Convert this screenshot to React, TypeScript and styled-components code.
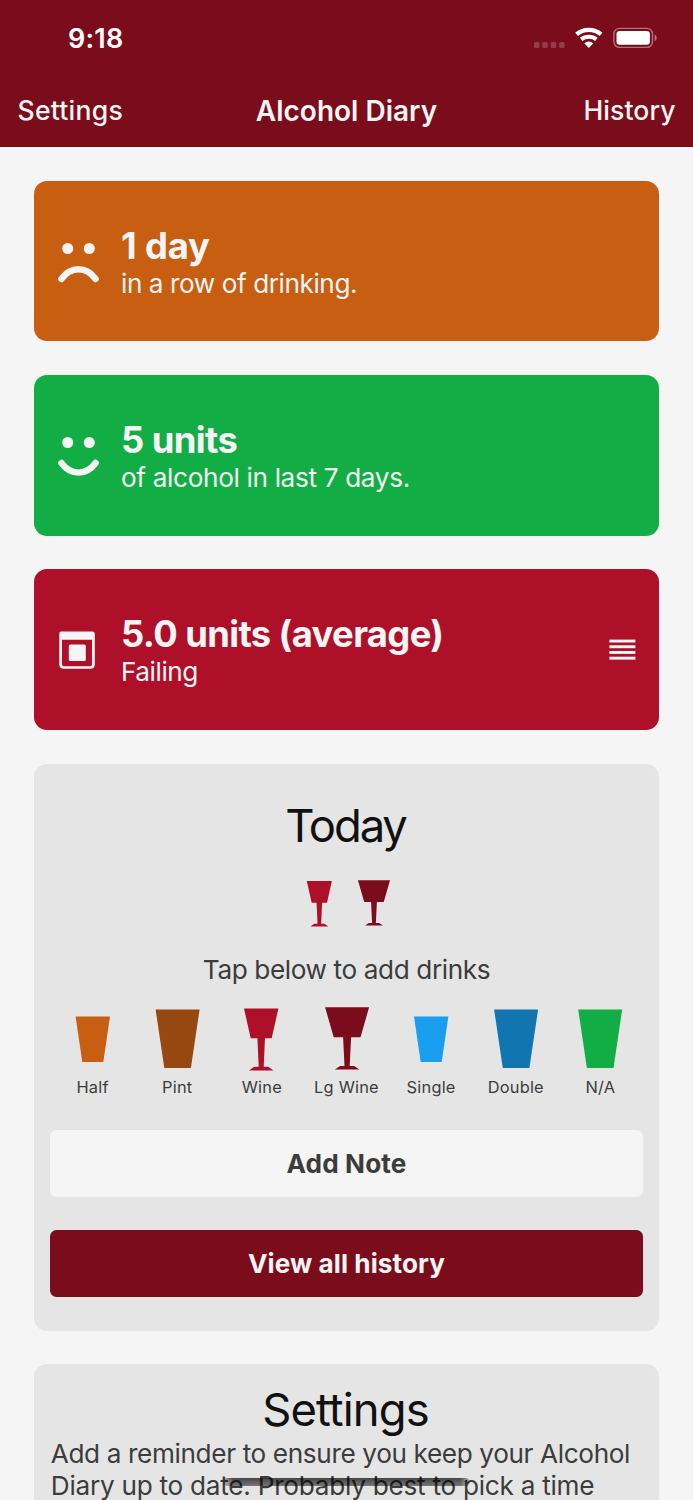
import React from "react";
import styled, { createGlobalStyle } from "styled-components";

const Global = createGlobalStyle`
  * { box-sizing: border-box; }
  html, body { margin: 0; background: #f5f5f5; }
  body {
    font-family: Inter, "Liberation Sans", sans-serif;
    overflow: hidden;
  }
  h1, h2, p { margin: 0; font-weight: 400; }
  button { font-family: inherit; border: 0; padding: 0; background: none; }
`;

const Screen = styled.div`
  width: 693px;
  height: 1500px;
  overflow: hidden;
  position: relative;
  background: #f5f5f5;
`;

const Header = styled.header`
  height: 147.3px;
  background: #7a0c1b;
  color: #fff;
`;

const StatusBar = styled.div`
  height: 74px;
  padding: 2px 36px 0 68px;
  display: flex;
  align-items: center;
  justify-content: space-between;
`;

const Clock = styled.span<{ $ls: number }>`
  font-size: 27px;
  font-weight: 600;
  letter-spacing: ${(p) => p.$ls}px;
`;

const StatusIcons = styled.svg`
  display: block;
`;

const NavBar = styled.nav`
  height: 73px;
  padding: 0 17.5px;
  display: grid;
  grid-template-columns: 1fr auto 1fr;
  align-items: center;
  color: #f5f5f5;
`;

const NavButton = styled.button<{ $end?: boolean; $ls: number }>`
  justify-self: ${(p) => (p.$end ? "end" : "start")};
  color: inherit;
  font-size: 26.6px;
  font-weight: 500;
  letter-spacing: ${(p) => p.$ls}px;
  margin-right: ${(p) => -p.$ls}px;
  margin-top: -2px;
  white-space: nowrap;
`;

const NavTitle = styled.h1<{ $ls: number }>`
  && { font-weight: 600; }
  font-size: 28px;
  letter-spacing: ${(p) => p.$ls}px;
  white-space: nowrap;
`;

const Content = styled.main`
  padding: 33.5px 33.6px 0;
  display: flex;
  flex-direction: column;
  gap: 33.6px;
`;

const StatCard = styled.section<{ $color: string }>`
  height: 160.7px;
  border-radius: 13px;
  background: ${(p) => p.$color};
  color: #f5f5f5;
  display: flex;
  align-items: center;
  padding: 2px 23px 0 23.4px;
`;

const StatIcon = styled.svg`
  width: 42px;
  height: 42px;
  margin: 2.6px 22px 0 0;
  flex: none;
  overflow: visible;
`;

const StatText = styled.div`
  flex: 1;
  padding-top: 1.2px;
`;

const StatValue = styled.h2<{ $ls: number }>`
  && { font-weight: 700; }
  font-size: 36.4px;
  line-height: 42px;
  letter-spacing: ${(p) => p.$ls}px;
  white-space: nowrap;
`;

const StatLabel = styled.p<{ $ls: number }>`
  padding-top: 0.2px;
  font-size: 26.2px;
  line-height: 34px;
  letter-spacing: ${(p) => p.$ls}px;
  white-space: nowrap;
`;

const MenuIcon = styled.svg`
  width: 28px;
  height: 24px;
  margin-top: -1px;
  flex: none;
`;

const Panel = styled.section<{ $height: number; $top: number }>`
  flex: none;
  height: ${(p) => p.$height}px;
  border-radius: 13px;
  background: #e5e5e5;
  padding: ${(p) => p.$top}px 16.7px 0;
`;

const PanelTitle = styled.h2<{ $ls: number }>`
  color: #111;
  font-size: 45.4px;
  line-height: 56px;
  text-align: center;
  letter-spacing: ${(p) => p.$ls}px;
  padding: 1px 2px 0 0;
`;

const Logged = styled.div`
  margin-top: 26px;
  height: 54px;
  display: flex;
  justify-content: center;
`;

const LoggedDrink = styled.svg`
  width: 54.7px;
  height: 54px;
`;

const Hint = styled.p<{ $ls: number }>`
  margin-top: 19.8px;
  color: #3c3c3c;
  font-size: 26.2px;
  line-height: 34px;
  text-align: center;
  letter-spacing: ${(p) => p.$ls}px;
`;

const Picker = styled.div`
  margin-top: 19.2px;
  display: grid;
  grid-template-columns: repeat(7, 1fr);
`;

const PickerItem = styled.button`
  display: flex;
  flex-direction: column;
  align-items: center;
  color: #3c3c3c;
  font-size: 16.4px;
  line-height: 22px;
  letter-spacing: 0.22px;
  white-space: nowrap;
`;

const DrinkIcon = styled.svg`
  width: 60px;
  height: 69.2px;
`;

const Action = styled.button<{ $primary?: boolean; $ls: number }>`
  display: block;
  width: 100%;
  height: 67px;
  margin-top: ${(p) => (p.$primary ? 33.3 : 32.2)}px;
  border-radius: 6.5px;
  background: ${(p) => (p.$primary ? "#7a0c1b" : "#f5f5f5")};
  color: ${(p) => (p.$primary ? "#f5f5f5" : "#3c3c3c")};
  font-size: 26.2px;
  font-weight: 700;
  letter-spacing: ${(p) => p.$ls}px;
`;

const Body = styled.p`
  color: #3c3c3c;
  font-size: 26.2px;
  line-height: 32px;
  padding-left: 0.5px;
`;

const Line = styled.span<{ $ls: number }>`
  display: block;
  white-space: nowrap;
  letter-spacing: ${(p) => p.$ls}px;
`;

const HomeIndicator = styled.div`
  position: absolute;
  left: 223px;
  top: 1478px;
  width: 247px;
  height: 8px;
  border-radius: 4px;
  background: linear-gradient(rgba(0, 0, 0, 0.7), rgba(0, 0, 0, 0.48));
  mask-image: linear-gradient(90deg, rgba(0, 0, 0, 0.3), #000 10px, #000 237px, rgba(0, 0, 0, 0.3));
`;

const shapes = {
  small: "M12.8 9.5H47.2L40.5 55H19.5Z",
  large: "M8 2.5H52L43.3 61H16.7Z",
  wine: "M12.8 1.5H47.2L40.5 31.2H33.8L32.5 59.8H37L42.4 63.6H17.8L23 59.8H27.5L26.2 31.2H19.5Z",
  lgWine: "M8 0.3H52L43.4 30.2H34L32.6 59H37L42.3 62.4H17.7L23 59H27.4L26 30.2H16.6Z",
};

const drinks: { name: string; shape: keyof typeof shapes; color: string; dx: number }[] = [
  { name: "Half", shape: "small", color: "#c75e12", dx: -0.2 },
  { name: "Pint", shape: "large", color: "#964810", dx: 0.6 },
  { name: "Wine", shape: "wine", color: "#ae1029", dx: -0.8 },
  { name: "Lg Wine", shape: "lgWine", color: "#7a0c1b", dx: 1.1 },
  { name: "Single", shape: "small", color: "#1a9ff0", dx: 0.2 },
  { name: "Double", shape: "large", color: "#1176b0", dx: 0.1 },
  { name: "N/A", shape: "large", color: "#12ae45", dx: 0.2 },
];

const Face = ({ happy }: { happy?: boolean }) => (
  <StatIcon viewBox={happy ? "0 0 42 42" : "0 -1 42 42"}>
    <circle cx="10.7" cy="5.5" r="5.5" fill="#f5f5f5" />
    <circle cx="32.3" cy="5.5" r="5.5" fill="#f5f5f5" />
    <path
      d={happy ? "M4.4 26C14 38.8 29 38.8 38.6 26" : "M4.4 36C14 23 29 23 38.6 36"}
      fill="none"
      stroke="#f5f5f5"
      strokeWidth="6.4"
      strokeLinecap="round"
    />
  </StatIcon>
);

const CalendarIcon = () => (
  <StatIcon viewBox="0 1.8 42 42">
    <path
      fill="#f5f5f5"
      fillRule="evenodd"
      d="M4 2.2H35.4Q37.8 2.2 37.8 4.6V35Q37.8 39.6 33.2 39.6H7Q2.3 39.6 2.3 35V4.6Q2.3 2.2 4 2.2ZM5 10.6V35Q5 37 7 37H33Q35 37 35 35V10.6Z"
    />
    <rect x="11.8" y="15.3" width="17" height="16.4" rx="1.5" fill="#f5f5f5" />
  </StatIcon>
);

export default function App() {
  return (
    <>
      <Global />
      <Screen>
        <Header>
          <StatusBar>
            <Clock $ls={0.2}>9:18</Clock>
            <StatusIcons width="124" height="22" viewBox="0 0 124 22">
              {[0.9, 9.2, 17.7, 26.1].map((x) => (
                <rect key={x} x={x} y="15" width="5.6" height="6" rx="1.6" fill="#fff" fillOpacity="0.2" />
              ))}
              <g fill="none" stroke="#fff" strokeWidth="4.4">
                <path d="M43.6 7.4C50.4 1.4 61.2 1.4 68 7.4" />
                <path d="M48.2 12.4C52.4 8.9 59.2 8.9 63.4 12.4" strokeWidth="4" />
              </g>
              <path d="M55.8 21L51.2 16.2Q55.8 12.8 60.4 16.2Z" fill="#fff" />
              <rect x="80.9" y="1.4" width="38.6" height="19" rx="5.6" fill="none" stroke="#fff" strokeOpacity="0.42" strokeWidth="1.4" />
              <rect x="83.5" y="4" width="33.4" height="13.8" rx="3.2" fill="#fff" />
              <path d="M121.7 7.6Q123.7 8.4 123.7 10.9T121.7 14.2Z" fill="#fff" fillOpacity="0.45" />
            </StatusIcons>
          </StatusBar>
          <NavBar>
            <NavButton $ls={0.22}>Settings</NavButton>
            <NavTitle $ls={0}>Alcohol Diary</NavTitle>
            <NavButton $end $ls={0.05}>History</NavButton>
          </NavBar>
        </Header>

        <Content>
          <StatCard $color="#c75e12">
            <Face />
            <StatText>
              <StatValue $ls={-0.2}>1 day</StatValue>
              <StatLabel $ls={-0.44}>in a row of drinking.</StatLabel>
            </StatText>
          </StatCard>
          <StatCard $color="#12ae45">
            <Face happy />
            <StatText>
              <StatValue $ls={-0.6}>5 units</StatValue>
              <StatLabel $ls={-0.35}>of alcohol in last 7 days.</StatLabel>
            </StatText>
          </StatCard>
          <StatCard $color="#ae1029">
            <CalendarIcon />
            <StatText>
              <StatValue $ls={-0.63}>5.0 units (average)</StatValue>
              <StatLabel $ls={-0.45}>Failing</StatLabel>
            </StatText>
            <MenuIcon viewBox="0 0 28 24">
              {[1.6, 7.3, 13, 18.7].map((y) => (
                <rect key={y} x="1.4" y={y} width="26" height="2.9" fill="#f5f5f5" />
              ))}
            </MenuIcon>
          </StatCard>

          <Panel $height={567} $top={33}>
            <PanelTitle $ls={-2.1}>Today</PanelTitle>
            <Logged>
              <LoggedDrink viewBox="-7.5 0 75 74">
                <path d={shapes.wine} fill="#ae1029" />
              </LoggedDrink>
              <LoggedDrink viewBox="-7 0 75 74">
                <path d={shapes.lgWine} fill="#7a0c1b" />
              </LoggedDrink>
            </Logged>
            <Hint $ls={-0.4}>Tap below to add drinks</Hint>
            <Picker>
              {drinks.map((d) => (
                <PickerItem key={d.name}>
                  <DrinkIcon viewBox="0 0 60 69.2">
                    <path d={shapes[d.shape]} fill={d.color} transform={`translate(${d.dx} 0)`} />
                  </DrinkIcon>
                  {d.name}
                </PickerItem>
              ))}
            </Picker>
            <Action $ls={0.1}>Add Note</Action>
            <Action $primary $ls={0.05}>View all history</Action>
          </Panel>

          <Panel $height={300} $top={17}>
            <PanelTitle $ls={-0.9}>Settings</PanelTitle>
            <Body>
              <Line $ls={-0.38}>Add a reminder to ensure you keep your Alcohol</Line>
              <Line $ls={-0.27}>Diary up to date. Probably best to pick a time</Line>
            </Body>
          </Panel>
        </Content>
        <HomeIndicator />
      </Screen>
    </>
  );
}
